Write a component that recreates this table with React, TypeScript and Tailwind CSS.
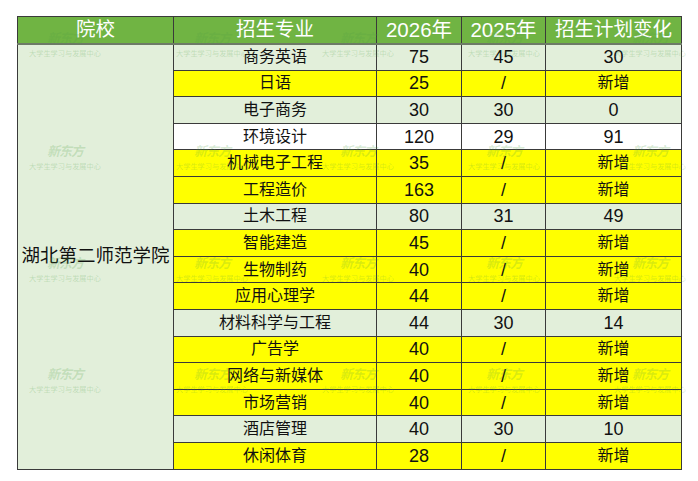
const rows: { major: string; y26: string; y25: string; diff: string; tone: "green" | "yellow" | "white" }[] = [
  { major: "商务英语", y26: "75", y25: "45", diff: "30", tone: "green" },
  { major: "日语", y26: "25", y25: "/", diff: "新增", tone: "yellow" },
  { major: "电子商务", y26: "30", y25: "30", diff: "0", tone: "green" },
  { major: "环境设计", y26: "120", y25: "29", diff: "91", tone: "white" },
  { major: "机械电子工程", y26: "35", y25: "/", diff: "新增", tone: "yellow" },
  { major: "工程造价", y26: "163", y25: "/", diff: "新增", tone: "yellow" },
  { major: "土木工程", y26: "80", y25: "31", diff: "49", tone: "green" },
  { major: "智能建造", y26: "45", y25: "/", diff: "新增", tone: "yellow" },
  { major: "生物制药", y26: "40", y25: "/", diff: "新增", tone: "yellow" },
  { major: "应用心理学", y26: "44", y25: "/", diff: "新增", tone: "yellow" },
  { major: "材料科学与工程", y26: "44", y25: "30", diff: "14", tone: "green" },
  { major: "广告学", y26: "40", y25: "/", diff: "新增", tone: "yellow" },
  { major: "网络与新媒体", y26: "40", y25: "/", diff: "新增", tone: "yellow" },
  { major: "市场营销", y26: "40", y25: "/", diff: "新增", tone: "yellow" },
  { major: "酒店管理", y26: "40", y25: "30", diff: "10", tone: "green" },
  { major: "休闲体育", y26: "28", y25: "/", diff: "新增", tone: "yellow" },
];

const toneClass = {
  green: "bg-[#e2efda]",
  yellow: "bg-[#ffff00]",
  white: "bg-white",
};

const font = { fontFamily: '"Liberation Sans", "Noto Sans CJK SC", sans-serif' };

// watermark grid laid over the sheet
const markCols = [29, 176, 322, 468, 614];
const markRows = [52, 165, 277, 388];

function Watermarks() {
  return (
    <div className="pointer-events-none absolute inset-0">
      {markRows.map((y) =>
        markCols.map((x) => (
          <div key={`${x}-${y}`} className="absolute flex flex-col items-center" style={{ left: x, top: y - 20 }}>
            <span className="text-[13px] font-bold italic leading-[14px] tracking-[-1px] text-[rgba(80,160,70,0.22)]">
              新东方
            </span>
            <span className="mt-[3px] whitespace-nowrap text-[7.2px] leading-[9px] text-[rgba(80,160,70,0.26)]">
              大学生学习与发展中心
            </span>
          </div>
        ))
      )}
    </div>
  );
}

export default function App() {
  const cell = "border border-[#3a3a3a] text-center align-middle p-0";
  const head = `${cell} border-b-2 border-b-[#6d7a66] font-normal`;
  const num = (v: string) => (/^[0-9/]+$/.test(v) ? "text-[18px]" : "text-[16px]");
  return (
    <div className="relative h-[481px] w-[698px] bg-white" style={font}>
      <div className="pt-[16px] pl-[17px]">
        <table className="table-fixed border-collapse text-[16px] leading-none text-[#111]">
          <colgroup>
            <col className="w-[156px]" />
            <col className="w-[203px]" />
            <col className="w-[85px]" />
            <col className="w-[84px]" />
            <col className="w-[136px]" />
          </colgroup>
          <thead>
            <tr className="h-[27px] bg-[#70b443] text-[19.5px] text-white">
              <th className={head}>院校</th>
              <th className={head}>招生专业</th>
              <th className={`${head} text-[20.5px]`}>2026年</th>
              <th className={`${head} text-[20.5px]`}>2025年</th>
              <th className={head}>招生计划变化</th>
            </tr>
          </thead>
          <tbody>
            {rows.map((r, i) => (
              <tr key={r.major} className={`h-[26.6px] ${toneClass[r.tone]}`}>
                {i === 0 && (
                  <td rowSpan={rows.length} className={`${cell} bg-[#e2efda] text-[18.5px]`}>
                    湖北第二师范学院
                  </td>
                )}
                <td className={cell}>{r.major}</td>
                <td className={`${cell} ${num(r.y26)}`}>{r.y26}</td>
                <td className={`${cell} ${num(r.y25)}`}>{r.y25}</td>
                <td className={`${cell} ${num(r.diff)}`}>{r.diff}</td>
              </tr>
            ))}
          </tbody>
        </table>
      </div>
      <Watermarks />
    </div>
  );
}
